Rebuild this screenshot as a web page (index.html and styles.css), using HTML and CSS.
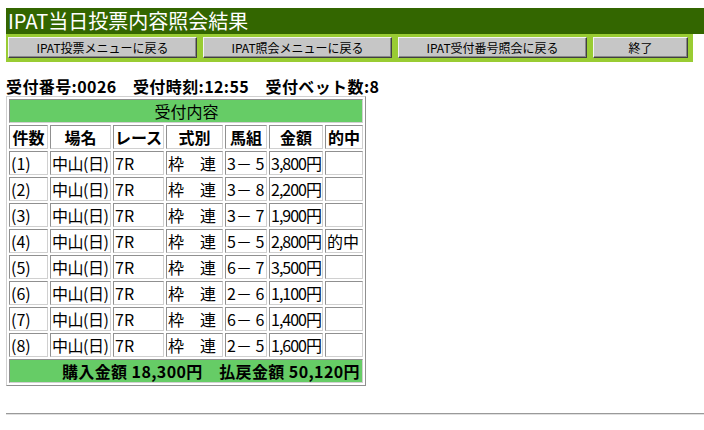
FILE: index.html
```html
<!DOCTYPE html>
<html lang="ja">
<head>
<meta charset="utf-8">
<title>IPAT当日投票内容照会結果</title>
<link rel="stylesheet" href="styles.css">
</head>
<body>
<div class="title-bar">IPAT当日投票内容照会結果</div>
<div class="nav-bar">
  <button class="nav-btn wide" type="button">IPAT投票メニューに戻る</button>
  <button class="nav-btn wide" type="button">IPAT照会メニューに戻る</button>
  <button class="nav-btn wide" type="button">IPAT受付番号照会に戻る</button>
  <button class="nav-btn narrow" type="button">終了</button>
</div>
<div class="info">受付番号:0026　受付時刻:12:55　受付ベット数:8</div>
<table class="result">
  <colgroup>
    <col class="c1"><col class="c2"><col class="c3"><col class="c4"><col class="c5"><col class="c6"><col class="c7">
  </colgroup>
  <tr><td class="band center" colspan="7">受付内容</td></tr>
  <tr class="head">
    <td>件数</td><td>場名</td><td>レース</td><td>式別</td><td>馬組</td><td>金額</td><td>的中</td>
  </tr>
  <tr><td>(1)</td><td class="place">中山(日)</td><td>7R</td><td>枠　連</td><td>3－ 5</td><td class="amt">3,800円</td><td></td></tr>
  <tr><td>(2)</td><td class="place">中山(日)</td><td>7R</td><td>枠　連</td><td>3－ 8</td><td class="amt">2,200円</td><td></td></tr>
  <tr><td>(3)</td><td class="place">中山(日)</td><td>7R</td><td>枠　連</td><td>3－ 7</td><td class="amt">1,900円</td><td></td></tr>
  <tr><td>(4)</td><td class="place">中山(日)</td><td>7R</td><td>枠　連</td><td>5－ 5</td><td class="amt">2,800円</td><td>的中</td></tr>
  <tr><td>(5)</td><td class="place">中山(日)</td><td>7R</td><td>枠　連</td><td>6－ 7</td><td class="amt">3,500円</td><td></td></tr>
  <tr><td>(6)</td><td class="place">中山(日)</td><td>7R</td><td>枠　連</td><td>2－ 6</td><td class="amt">1,100円</td><td></td></tr>
  <tr><td>(7)</td><td class="place">中山(日)</td><td>7R</td><td>枠　連</td><td>6－ 6</td><td class="amt">1,400円</td><td></td></tr>
  <tr><td>(8)</td><td class="place">中山(日)</td><td>7R</td><td>枠　連</td><td>2－ 5</td><td class="amt">1,600円</td><td></td></tr>
  <tr><td class="band right" colspan="7">購入金額 18,300円　払戻金額 50,120円</td></tr>
</table>
<hr class="rule">
</body>
</html>
```
FILE: styles.css
```css
html, body {
  background: #ffffff;
}
body {
  margin: 8px 0 0 6px;
  font-family: "Noto Sans CJK JP", "Noto Sans", sans-serif;
  color: #000000;
}
.title-bar {
  background: #336600;
  color: #ffffff;
  font-size: 20px;
  line-height: 26px;
  height: 26px;
  padding-left: 2px;
  white-space: nowrap;
}
.nav-bar {
  background: #99cc33;
  width: 687px;
  height: 28px;
  box-sizing: border-box;
  padding: 3px 0 0 2px;
  display: flex;
  gap: 6px;
}
.nav-btn {
  height: 21px;
  margin: 0;
  padding: 0;
  background: #c6c6c6;
  border: 1px solid;
  border-color: #f4f4f4 #404040 #404040 #f4f4f4;
  box-shadow: inset -1px -1px 0 #888888;
  font-family: "Noto Sans CJK JP", sans-serif;
  font-size: 12px;
  line-height: 19px;
  color: #000000;
}
.nav-btn.wide {
  width: 189px;
}
.nav-btn.narrow {
  width: 95px;
}
.info {
  margin-top: 15px;
  font-size: 16px;
  font-weight: bold;
  line-height: 18px;
  letter-spacing: 0.4px;
  white-space: nowrap;
}
.result {
  margin-top: 1px;
  width: 360px;
  table-layout: fixed;
  border-collapse: separate;
  border-spacing: 2px;
  border: 1px solid;
  border-color: #d0d0d0 #909090 #909090 #d0d0d0;
}
.c1 { width: 39px; }
.c2 { width: 61px; }
.c3 { width: 51px; }
.c4 { width: 57px; }
.c5 { width: 42px; }
.c6 { width: 54px; }
.c7 { width: 38px; }
.result td {
  height: 22px;
  padding: 0 0 0 1px;
  border: 1px solid;
  border-color: #909090 #d0d0d0 #d0d0d0 #909090;
  font-size: 16px;
  line-height: 22px;
  white-space: nowrap;
  overflow: hidden;
  text-align: left;
}
.result .head td {
  font-weight: bold;
  text-align: center;
  padding: 0;
}
.result td.band {
  background: #66cc66;
}
.result td.center {
  text-align: center;
  font-weight: normal;
}
.result td.right {
  text-align: right;
  font-weight: bold;
  letter-spacing: 0.4px;
  padding-right: 2px;
}
.result td.place {
  letter-spacing: -0.5px;
}
.result td.amt {
  letter-spacing: -1px;
}
.rule {
  margin: 27px 0 0 0;
  height: 0;
  border: 0;
  border-top: 1px solid #9a9a9a;
  border-bottom: 1px solid #e0e0e0;
}
```
